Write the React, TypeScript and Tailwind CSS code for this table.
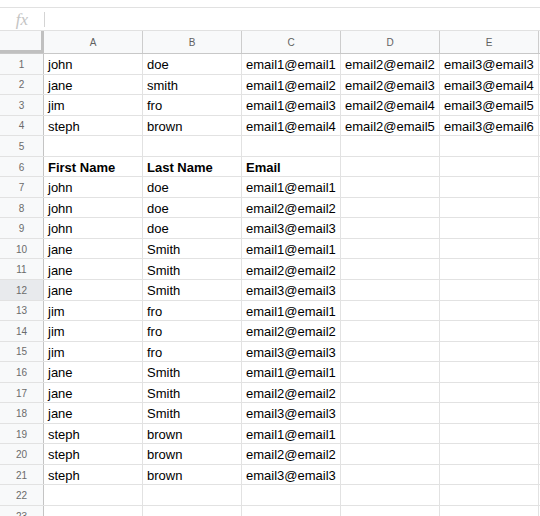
const cols = ["A", "B", "C", "D", "E"];

const data: string[][] = [
  ["john", "doe", "email1@email1", "email2@email2", "email3@email3"],
  ["jane", "smith", "email1@email2", "email2@email3", "email3@email4"],
  ["jim", "fro", "email1@email3", "email2@email4", "email3@email5"],
  ["steph", "brown", "email1@email4", "email2@email5", "email3@email6"],
  [],
  ["First Name", "Last Name", "Email"],
  ["john", "doe", "email1@email1"],
  ["john", "doe", "email2@email2"],
  ["john", "doe", "email3@email3"],
  ["jane", "Smith", "email1@email1"],
  ["jane", "Smith", "email2@email2"],
  ["jane", "Smith", "email3@email3"],
  ["jim", "fro", "email1@email1"],
  ["jim", "fro", "email2@email2"],
  ["jim", "fro", "email3@email3"],
  ["jane", "Smith", "email1@email1"],
  ["jane", "Smith", "email2@email2"],
  ["jane", "Smith", "email3@email3"],
  ["steph", "brown", "email1@email1"],
  ["steph", "brown", "email2@email2"],
  ["steph", "brown", "email3@email3"],
  [],
  [],
];

export default function App() {
  return (
    <div className="w-[540px] h-[516px] overflow-hidden bg-white font-['Liberation_Sans',Arial,sans-serif]">
      {/* formula bar */}
      <div className="mt-[7px] h-[24px] border-y border-[#e1e1e1] flex items-center">
        <div className="w-[44px] flex justify-center">
          <span className="text-[17px] italic text-[#c4c4c4] font-['Liberation_Serif',serif] leading-none">fx</span>
        </div>
        <div className="w-px h-[15px] bg-[#d4d4d4]" />
      </div>

      {/* column header */}
      <div className="grid grid-cols-[44px_repeat(5,99px)] h-[23px] bg-[#f8f9fa] border-b border-[#c8c8c8]">
        <div className="border-r-[3px] border-b-[3px] border-[#c0c0c0]" />
        {cols.map((c) => (
          <div
            key={c}
            className="flex items-center justify-center text-[10px] text-[#616161] border-r border-[#cdcdcd]"
          >
            {c}
          </div>
        ))}
      </div>

      {/* rows */}
      {data.map((row, i) => (
        <div key={i} className="grid grid-cols-[44px_repeat(5,99px)] h-[20.55px] border-b border-[#e2e2e2]">
          <div
            className={`flex items-center justify-center pt-px text-[10px] text-[#6b6b6b] border-r border-[#c4c4c4] ${
              i === 11 ? "bg-[#e8eaed]" : "bg-[#f8f9fa]"
            }`}
          >
            {i + 1}
          </div>
          {cols.map((c, j) => (
            <div
              key={c}
              className={`flex items-center pl-[4px] pt-[2px] text-[13px] text-black border-r border-[#e2e2e2] whitespace-nowrap overflow-hidden ${
                i === 5 ? "font-bold" : ""
              }`}
            >
              {row[j] ?? ""}
            </div>
          ))}
        </div>
      ))}
    </div>
  );
}
